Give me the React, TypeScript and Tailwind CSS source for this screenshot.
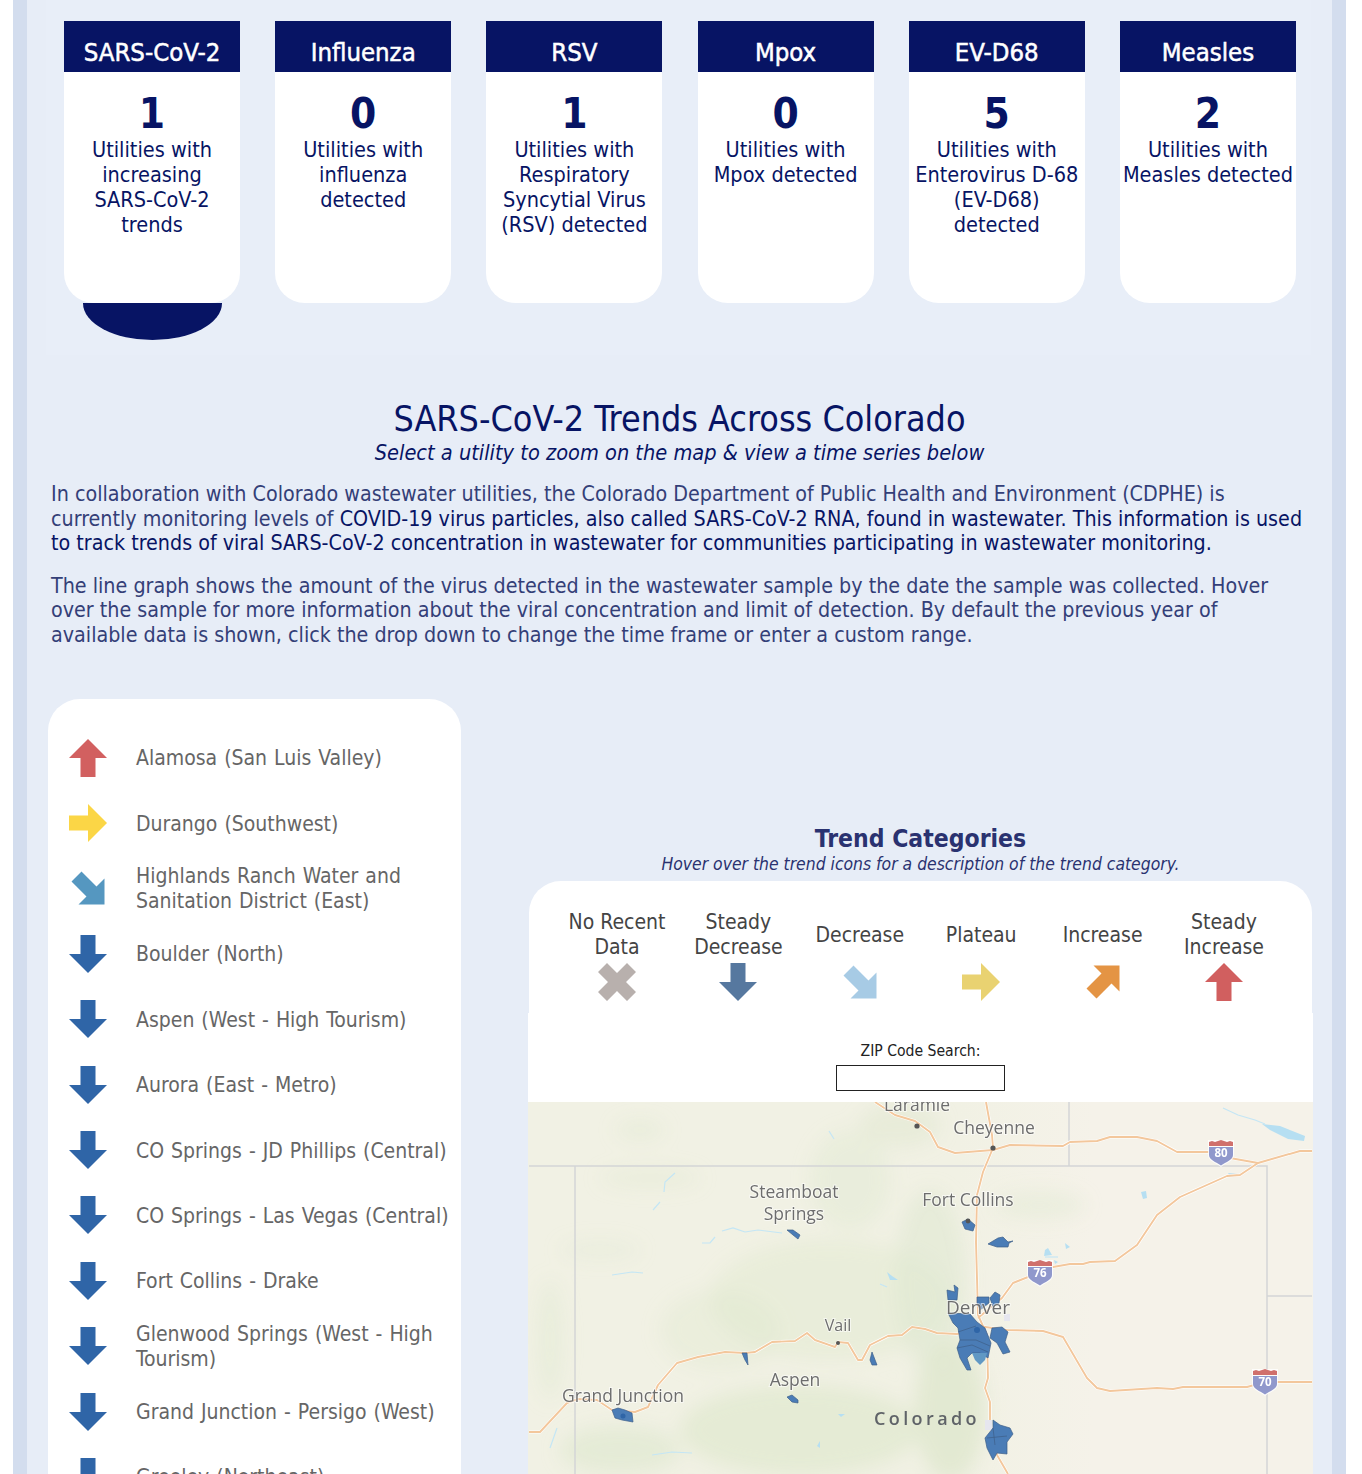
const fontStack = { fontFamily: '"DejaVu Sans Condensed", "DejaVu Sans", sans-serif' }

const cards = [
  { title: 'SARS-CoV-2', count: '1', text: ['Utilities with', 'increasing', 'SARS-CoV-2', 'trends'], active: true },
  { title: 'Influenza', count: '0', text: ['Utilities with', 'influenza', 'detected'] },
  { title: 'RSV', count: '1', text: ['Utilities with', 'Respiratory', 'Syncytial Virus', '(RSV) detected'] },
  { title: 'Mpox', count: '0', text: ['Utilities with', 'Mpox detected'] },
  { title: 'EV-D68', count: '5', text: ['Utilities with', 'Enterovirus D-68', '(EV-D68)', 'detected'] },
  { title: 'Measles', count: '2', text: ['Utilities with', 'Measles detected'] },
]

const UP = 'M19 0 L38 19 H26.5 V38 H11.5 V19 H0 Z'
const RIGHT = 'M0 11.5 H19 V0 L38 19 L19 38 V26.5 H0 Z'
const DOWN = 'M11.5 0 H26.5 V19 H38 L19 38 L0 19 H11.5 Z'
const SE = 'M12.5 2.5 L27.5 17.5 L35.5 9.5 V35.5 H9.5 L17.5 27.5 L2.5 12.5 Z'
const NE = 'M12.5 35.5 L27.5 20.5 L35.5 28.5 V2.5 H9.5 L17.5 10.5 L2.5 25.5 Z'
const CROSS = 'M9 0 L19 10 L29 0 L38 9 L28 19 L38 29 L29 38 L19 28 L9 38 L0 29 L10 19 L0 9 Z'

function Arrow({ d, color }: { d: string; color: string }) {
  return (
    <svg viewBox="0 0 38 38" className="h-[38px] w-[38px]">
      <path d={d} fill={color} />
    </svg>
  )
}

const utilities = [
  { name: 'Alamosa (San Luis Valley)', d: UP, color: '#d26060' },
  { name: 'Durango (Southwest)', d: RIGHT, color: '#fbd646' },
  { name: 'Highlands Ranch Water and Sanitation District (East)', d: SE, color: '#5597c0' },
  { name: 'Boulder (North)', d: DOWN, color: '#2f65a7' },
  { name: 'Aspen (West - High Tourism)', d: DOWN, color: '#2f65a7' },
  { name: 'Aurora (East - Metro)', d: DOWN, color: '#2f65a7' },
  { name: 'CO Springs - JD Phillips (Central)', d: DOWN, color: '#2f65a7' },
  { name: 'CO Springs - Las Vegas (Central)', d: DOWN, color: '#2f65a7' },
  { name: 'Fort Collins - Drake', d: DOWN, color: '#2f65a7' },
  { name: 'Glenwood Springs (West - High Tourism)', d: DOWN, color: '#2f65a7' },
  { name: 'Grand Junction - Persigo (West)', d: DOWN, color: '#2f65a7' },
  { name: 'Greeley (Northeast)', d: DOWN, color: '#2f65a7' },
]

const trends = [
  { label: ['No Recent', 'Data'], d: CROSS, color: '#b8b0ad' },
  { label: ['Steady', 'Decrease'], d: DOWN, color: '#56789f' },
  { label: ['Decrease'], d: SE, color: '#a7cbe5' },
  { label: ['Plateau'], d: RIGHT, color: '#e9d271' },
  { label: ['Increase'], d: NE, color: '#e49444' },
  { label: ['Steady', 'Increase'], d: UP, color: '#d15f5f' },
]

function Shield({ x, y, n }: { x: number; y: number; n: string }) {
  return (
    <g transform={`translate(${x} ${y})`}>
      <path d="M-13 -13 V2 C-13 8 -5 10 0 14 C5 10 13 8 13 2 V-13 Z" fill="#fff" opacity="0.8" />
      <path d="M-12 -6 V2 C-12 7 -5 9 0 12.5 C5 9 12 7 12 2 V-6 Z" fill="#9098cc" />
      <path d="M-12 -7 V-11 L-9 -12 L-6 -11 L-3 -12 L0 -13 L3 -12 L6 -11 L9 -12 L12 -11 V-7 Z" fill="#d0706c" />
      <text x="0" y="3.5" textAnchor="middle" fontSize="11.5" fontWeight="700" fill="#fff" fontFamily="'Open Sans', sans-serif">
        {n}
      </text>
    </g>
  )
}

function MapLabel({ x, y, children, size = 17.5 }: { x: number; y: number; children: string; size?: number }) {
  return (
    <text
      x={x}
      y={y}
      textAnchor="middle"
      fontSize={size}
      fill="#6d6d6d"
      stroke="#ffffff"
      strokeOpacity="0.6"
      strokeWidth="2"
      paintOrder="stroke"
      fontFamily="'Open Sans', sans-serif"
    >
      {children}
    </text>
  )
}

const roads = [
  'M529 1432 L540 1432 L567 1403 L578 1399 L597 1400 L612 1410 L635 1412 L648 1407 L658 1385 L677 1363 L698 1357 L725 1352 L745 1353 L755 1352 L772 1342 L795 1341 L807 1333 L815 1340 L835 1347 L838 1342 L848 1343 L858 1360 L862 1360 L870 1345 L888 1336 L902 1335 L912 1327 L925 1329 L937 1333 L957 1334 L975 1330',
  'M978 1326 L1007 1330 L1043 1331 L1063 1337 L1087 1378 L1097 1388 L1110 1391 L1157 1388 L1173 1389 L1183 1387 L1247 1387 L1265 1382 L1312 1382',
  'M986 1102 L992 1135 L993 1148 L983 1172 L977 1195 L976 1242 L978 1315 L987 1335 L988 1378 L985 1388 L990 1402 L990 1422 L997 1455 L1008 1474',
  'M875 1102 L895 1115 L915 1121 L930 1132 L938 1147 L955 1153 L993 1150 L1010 1145 L1063 1146 L1070 1142 L1097 1141 L1110 1137 L1137 1137 L1157 1141 L1177 1152 L1210 1152 L1230 1158 L1258 1163 L1300 1151 L1312 1151',
  'M978 1318 L1002 1298 L1013 1283 L1028 1277 L1053 1267 L1070 1264 L1083 1264 L1090 1262 L1115 1261 L1137 1245 L1157 1215 L1180 1197 L1227 1176 L1240 1175 L1258 1163',
]

const utilityShapes = [
  // Denver metro
  'M948 1313 L970 1314 L977 1322 L985 1328 L991 1343 L988 1358 L980 1353 L972 1353 L967 1358 L971 1370 L967 1370 L960 1358 L957 1348 L960 1340 L958 1328 L953 1323 Z',
  'M992 1328 L1002 1327 L1008 1332 L1005 1342 L1010 1352 L1003 1354 L997 1343 L990 1338 Z',
  'M977 1297 L989 1297 L989 1303 L980 1310 L977 1303 Z',
  'M995 1292 L1000 1295 L999 1303 L993 1307 L990 1298 Z',
  'M947 1290 L955 1292 L954 1285 L958 1288 L957 1300 L948 1300 Z',
  // Fort Collins, Greeley
  'M962 1222 L968 1219 L975 1225 L973 1231 L965 1229 Z',
  'M988 1244 L998 1238 L1003 1237 L1008 1242 L1013 1241 L1009 1243 L1008 1247 L997 1247 Z',
  // CO Springs
  'M993 1420 L1000 1425 L1010 1428 L1013 1434 L1007 1442 L1007 1454 L997 1453 L993 1460 L987 1448 L985 1438 L993 1428 Z',
  // Western slope
  'M612 1410 L618 1408 L625 1410 L632 1413 L633 1422 L622 1420 L615 1418 Z',
  'M787 1397 L792 1395 L798 1400 L798 1403 L792 1402 Z',
  'M787 1230 L793 1230 L800 1235 L798 1239 L793 1235 Z',
  'M872 1352 L877 1365 L872 1365 L870 1360 Z',
  'M742 1353 L747 1353 L748 1365 L745 1360 Z',
]

const water = [
  'M1262 1124 L1280 1126 L1305 1136 L1304 1141 L1288 1139 L1270 1130 Z',
  'M1045 1250 L1048 1248 L1052 1255 L1044 1256 Z',
  'M1065 1243 L1070 1247 L1066 1249 Z',
  'M1141 1192 L1146 1191 L1147 1198 L1143 1199 Z',
  'M1054 1260 L1058 1262 L1055 1264 Z',
  'M1228 1173 L1238 1174 L1230 1176 Z',
  'M887 1272 L892 1276 L898 1280 L890 1280 Z',
  'M838 1414 L845 1414 L841 1417 Z',
  'M817 1446 L820 1441 L820 1448 Z',
]

const rivers = [
  'M722 1231 L733 1228 L745 1232 L758 1230 L782 1233',
  'M702 1243 L710 1243 L715 1237',
  'M612 1275 L632 1272 L643 1273',
  'M675 1173 L665 1182 L664 1192',
  'M660 1202 L653 1210',
  'M557 1428 L550 1448',
  'M652 1455 L672 1452 L692 1453',
  'M880 1284 L887 1287',
  'M1045 1257 L1058 1257',
  'M1223 1108 L1238 1115 L1255 1120 L1265 1124',
  'M829 1131 L834 1139',
]

const greens = [
  { cx: 830, cy: 1300, rx: 120, ry: 60, o: 0.45 },
  { cx: 720, cy: 1330, rx: 60, ry: 40, o: 0.35 },
  { cx: 930, cy: 1280, rx: 35, ry: 90, o: 0.55 },
  { cx: 950, cy: 1410, rx: 35, ry: 70, o: 0.85 },
  { cx: 800, cy: 1430, rx: 120, ry: 45, o: 0.7 },
  { cx: 620, cy: 1450, rx: 60, ry: 24, o: 0.65 },
  { cx: 650, cy: 1178, rx: 50, ry: 10, o: 0.35 },
  { cx: 600, cy: 1250, rx: 40, ry: 10, o: 0.3 },
  { cx: 850, cy: 1180, rx: 40, ry: 50, o: 0.4 },
  { cx: 900, cy: 1125, rx: 40, ry: 22, o: 0.5 },
  { cx: 1040, cy: 1205, rx: 45, ry: 14, o: 0.4 },
  { cx: 550, cy: 1340, rx: 14, ry: 60, o: 0.4 },
  { cx: 640, cy: 1130, rx: 24, ry: 10, o: 0.4 },
]

function ColoradoMap() {
  return (
    <svg viewBox="528 1102 785 372" className="block h-[372px] w-full">
      <defs>
        <filter id="soft" x="-50%" y="-50%" width="200%" height="200%">
          <feGaussianBlur stdDeviation="9" />
        </filter>
        <linearGradient id="land" x1="0" x2="1" y1="0" y2="0">
          <stop offset="0" stopColor="#f1f1e4" />
          <stop offset="0.55" stopColor="#f1f1e4" />
          <stop offset="0.72" stopColor="#f5f2e9" />
          <stop offset="1" stopColor="#f5f2e9" />
        </linearGradient>
      </defs>
      <rect x="528" y="1102" width="785" height="372" fill="url(#land)" />
      <g filter="url(#soft)">
        {greens.map(g => (
          <ellipse key={`${g.cx}-${g.cy}`} cx={g.cx} cy={g.cy} rx={g.rx} ry={g.ry} fill="#dfe8cf" opacity={g.o} />
        ))}
      </g>
      <g stroke="#d3d5d6" strokeWidth="1.5" fill="none">
        <path d="M529 1166 H1267 V1474 M575 1166 V1474 M1069 1102 V1166 M1267 1296 H1312" />
      </g>
      {water.map(d => (
        <path key={d} d={d} fill="#b6dff2" />
      ))}
      {rivers.map(d => (
        <path key={d} d={d} fill="none" stroke="#c4e6f5" strokeWidth="1.2" />
      ))}
      <g fill="none" strokeLinejoin="round">
        {roads.map(d => (
          <path key={d} d={d} stroke="#ffffff" strokeWidth="3.2" />
        ))}
        {roads.map(d => (
          <path key={`${d}-in`} d={d} stroke="#f3c79c" strokeWidth="1.9" />
        ))}
      </g>
      <circle cx="917" cy="1126" r="2.6" fill="#555" />
      <circle cx="993" cy="1148" r="2.6" fill="#555" />
      <circle cx="838" cy="1343" r="2" fill="#555" />
      <rect x="1004" y="1314" width="6" height="7" fill="#e6e6ef" />
      <rect x="985" y="1420" width="7" height="10" fill="#e6e6ef" />
      {utilityShapes.map(d => (
        <path key={d} d={d} fill="#4a7cb6" stroke="#3d5f88" strokeWidth="0.7" />
      ))}
      <path d="M972 1353 L987 1353 L985 1360 L980 1365 L975 1360 Z" fill="#6198c4" />
      <path d="M958 1332 L976 1326 M960 1340 L976 1340 L990 1346 M957 1348 L972 1345 L988 1352 M993 1428 L995 1445 M987 1438 L1007 1436" fill="none" stroke="#3d5f88" strokeWidth="0.7" />
      <circle cx="977" cy="1330" r="3" fill="#2f65a7" />
      <circle cx="623" cy="1416" r="2.5" fill="#2f65a7" />
      <circle cx="968" cy="1221" r="2.4" fill="#555" />
      <MapLabel x={917} y={1111}>Laramie</MapLabel>
      <MapLabel x={994} y={1134}>Cheyenne</MapLabel>
      <MapLabel x={794} y={1198}>Steamboat</MapLabel>
      <MapLabel x={794} y={1220}>Springs</MapLabel>
      <MapLabel x={968} y={1206}>Fort Collins</MapLabel>
      <MapLabel x={978} y={1314} size={19}>Denver</MapLabel>
      <MapLabel x={838} y={1331} size={16}>Vail</MapLabel>
      <MapLabel x={795} y={1386}>Aspen</MapLabel>
      <MapLabel x={623} y={1402}>Grand Junction</MapLabel>
      <text x="927" y="1425" textAnchor="middle" fontSize="18" fontWeight="600" letterSpacing="3.4" fill="#5f6368" fontFamily="'Open Sans', sans-serif">
        Colorado
      </text>
      <Shield x={1221} y={1153} n="80" />
      <Shield x={1040} y={1273} n="76" />
      <Shield x={1265} y={1382} n="70" />
    </svg>
  )
}

export default function App() {
  return (
    <div className="h-[1474px] overflow-hidden bg-white pl-[13px] pr-[16px]" style={fontStack}>
      <div className="h-full border-x-[14px] border-[#d3ddee] bg-[#e7edf7]">
        {/* Disease cards */}
        <div className="ml-[19px] mr-[21px] flex h-[355px] justify-between bg-[#e8eef8] pl-[18px] pr-[15px] pt-[21px]">
          {cards.map(card => (
            <div key={card.title} className="w-[176px]">
              <div className="flex h-[51px] items-center justify-center bg-[#071464] pt-[11px] text-[25.5px] text-white [-webkit-text-stroke:0.5px_white]">
                {card.title}
              </div>
              <div className="h-[231px] rounded-b-[30px] bg-white pt-[19px] text-center text-[#071464]">
                <div className="text-[42px] font-bold leading-[46px]">{card.count}</div>
                <div className="text-[21.5px] leading-[25px]">
                  {card.text.map(line => (
                    <div key={line}>{line}</div>
                  ))}
                </div>
              </div>
              {card.active && <div className="mx-auto h-[37px] w-[139px] rounded-b-[70px_37px] bg-[#071464]" />}
            </div>
          ))}
        </div>

        {/* Heading and intro */}
        <div className="mt-[43px] text-center text-[#071464]">
          <h1 className="text-[35.6px] leading-[42px]">SARS-CoV-2 Trends Across Colorado</h1>
          <p className="text-[21.6px] italic leading-[25px]">Select a utility to zoom on the map &amp; view a time series below</p>
        </div>
        <div className="mt-[17px] whitespace-nowrap pl-[24px] text-[21.3px] leading-[24.5px] text-[#343f78]">
          <p>
            In collaboration with Colorado wastewater utilities, the Colorado Department of Public Health and Environment (CDPHE) is
            <br />
            currently monitoring levels of{' '}
            <span className="text-[#071464]">
              COVID-19 virus particles, also called SARS-CoV-2 RNA, found in wastewater. This information is used
              <br />
              to track trends of viral SARS-CoV-2 concentration in wastewater for communities participating in wastewater monitoring.
            </span>
          </p>
          <p className="mt-[18px]">
            The line graph shows the amount of the virus detected in the wastewater sample by the date the sample was collected. Hover
            <br />
            over the sample for more information about the viral concentration and limit of detection. By default the previous year of
            <br />
            available data is shown, click the drop down to change the time frame or enter a custom range.
          </p>
        </div>

        {/* Utility list and map */}
        <div className="mt-[52px] flex pl-[21px]">
          <div className="w-[413px] shrink-0 rounded-t-[32px] bg-white pr-[8px] pt-[26px]">
            {utilities.map(u => (
              <div key={u.name} className="flex h-[65.4px] items-center text-[21px] leading-[25px] text-[#666666] [word-spacing:1px]">
                <div className="flex w-[88px] shrink-0 justify-center pr-[8px]">
                  <Arrow d={u.d} color={u.color} />
                </div>
                <span className="pt-[2px]">{u.name}</span>
              </div>
            ))}
          </div>
          <div className="ml-[67px] w-[785px] shrink-0 pt-[125px] text-center">
            <h2 className="text-[24.5px] font-bold leading-[30px] text-[#2a3270]">Trend Categories</h2>
            <p className="text-[17.4px] italic leading-[20px] text-[#2a3270]">
              Hover over the trend icons for a description of the trend category.
            </p>
            <div className="mx-[1px] mt-[7px] flex h-[132px] justify-center rounded-t-[32px] bg-white pt-[29px] text-[21px] leading-[25px] text-[#444444]">
              {trends.map(t => (
                <div key={t.label[0] + t.label.length} className="flex w-[121.4px] flex-col items-center">
                  <div className="flex h-[50px] flex-col justify-center">
                    {t.label.map(line => (
                      <div key={line}>{line}</div>
                    ))}
                  </div>
                  <div className="mt-[3px]">
                    <Arrow d={t.d} color={t.color} />
                  </div>
                </div>
              ))}
            </div>
            <div className="flex h-[89px] flex-col items-center bg-white pt-[28px] text-[15.6px] leading-[20px] text-[#222222]">
              <label htmlFor="zip">ZIP Code Search:</label>
              <input id="zip" className="mt-[4px] h-[26px] w-[169px] border border-[#222222] bg-white" />
            </div>
            <ColoradoMap />
          </div>
        </div>
      </div>
    </div>
  )
}
